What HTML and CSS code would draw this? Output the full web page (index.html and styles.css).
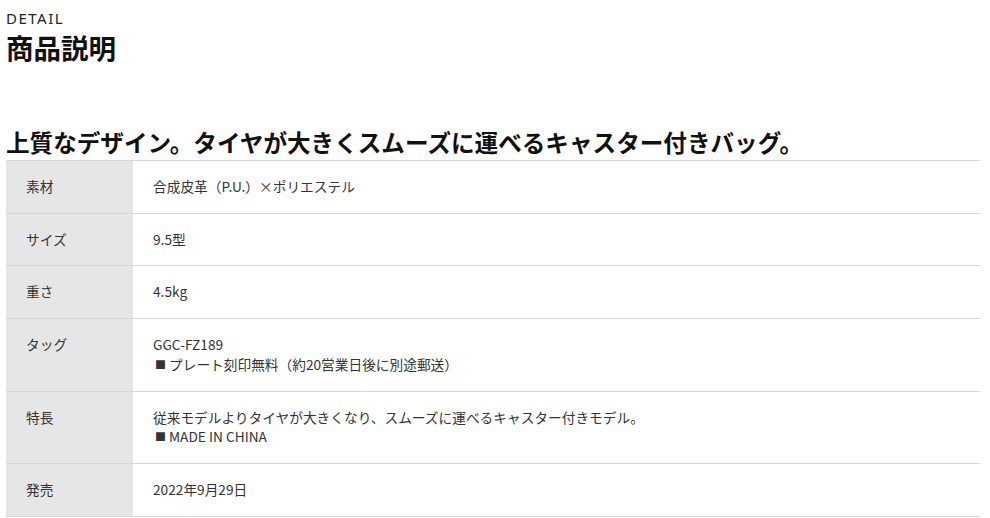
FILE: index.html
```html
<!DOCTYPE html>
<html lang="ja">
<head>
<meta charset="utf-8">
<link rel="stylesheet" href="styles.css">
</head>
<body>
<div class="page">
  <header class="sec-head">
    <p class="eyebrow">DETAIL</p>
    <h2 class="sec-title">商品説明</h2>
  </header>
  <h3 class="catch">上質なデザイン。タイヤが大きくスムーズに運べるキャスター付きバッグ。</h3>
  <table class="spec">
    <tr><th>素材</th><td>合成皮革（P.U.）×ポリエステル</td></tr>
    <tr><th>サイズ</th><td>9.5型</td></tr>
    <tr><th>重さ</th><td>4.5kg</td></tr>
    <tr><th>タッグ</th><td>GGC-FZ189<br><span class="sq">■</span>プレート刻印無料（約20営業日後に別途郵送）</td></tr>
    <tr><th>特長</th><td>従来モデルよりタイヤが大きくなり、スムーズに運べるキャスター付きモデル。<br><span class="sq">■</span>MADE IN CHINA</td></tr>
    <tr><th>発売</th><td>2022年9月29日</td></tr>
  </table>
</div>
</body>
</html>
```
FILE: styles.css
```css
html, body {
  margin: 0;
  padding: 0;
  background: #fff;
}
body {
  font-family: "Noto Sans CJK JP", "Noto Sans", sans-serif;
  color: #222;
}
.page {
  width: 974px;
  padding: 8px 0 0 6px;
}
.sec-head {
  margin: 0;
}
.eyebrow {
  margin: 0;
  font-family: "Noto Sans", "Noto Sans CJK JP", sans-serif;
  font-size: 15px;
  line-height: 20px;
  letter-spacing: 1.5px;
  color: #222;
}
.sec-title {
  margin: 2px 0 0;
  font-size: 27.5px;
  line-height: 34px;
  font-weight: 700;
  color: #111;
}
.catch {
  margin: 64px 0 4px;
  font-size: 23.6px;
  line-height: 28px;
  font-weight: 700;
  color: #111;
}
.spec {
  width: 974px;
  border-collapse: collapse;
  font-size: 13.7px;
  line-height: 19.7px;
  color: #333;
}
.spec th, .spec td {
  border-top: 1px solid #d6d6d6;
  border-bottom: 1px solid #d6d6d6;
  padding: 16px 20px;
  text-align: left;
  vertical-align: top;
  font-weight: 400;
}
.spec th {
  width: 87px;
  background: #e6e6e6;
}
.spec td {
  background: #fff;
}
.sq {
  display: inline-block;
  font-size: 11px;
  margin: 0 3px 0 2px;
  vertical-align: 1px;
}
```
